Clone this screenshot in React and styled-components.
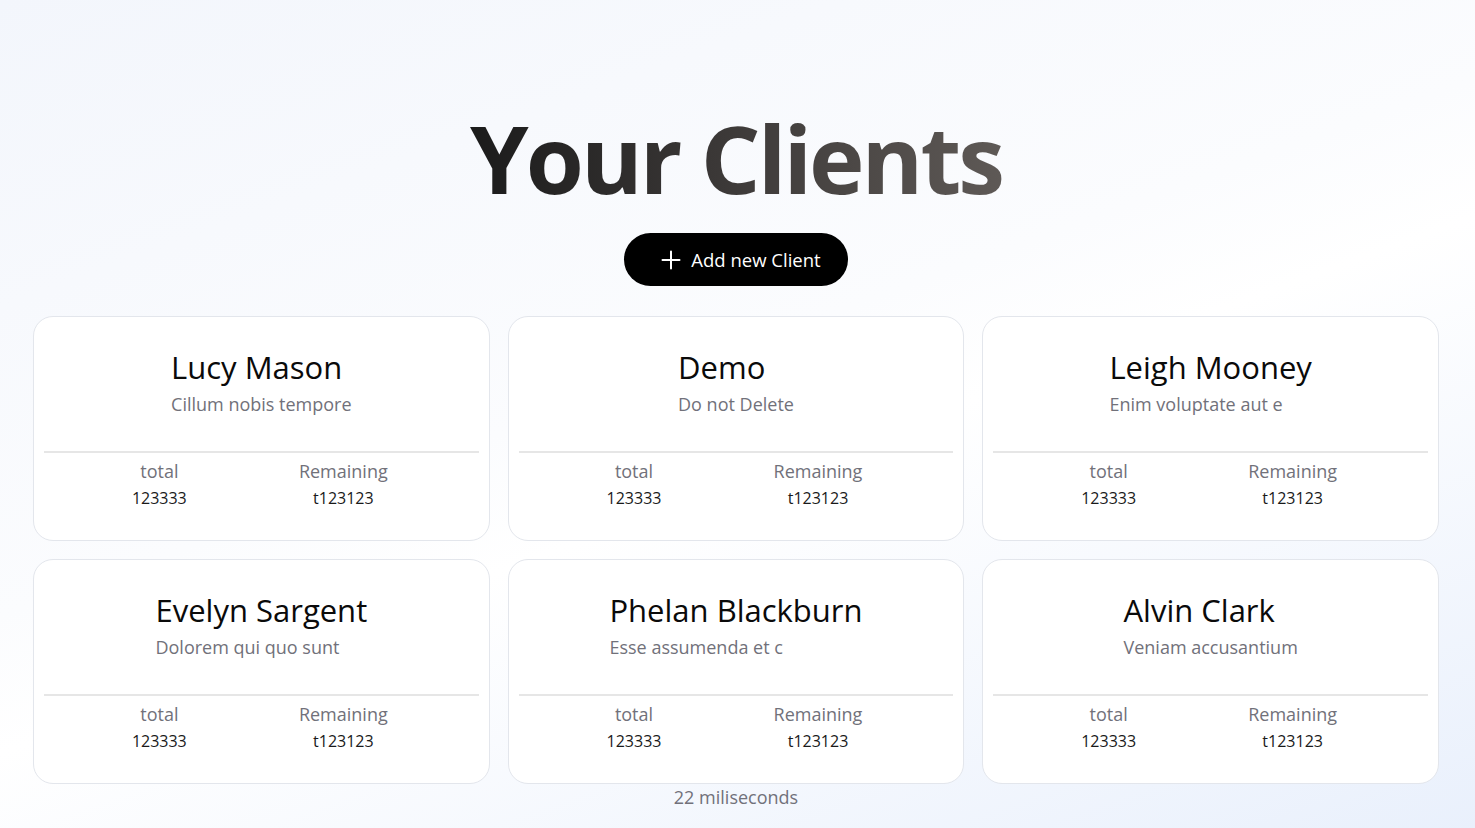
import React from 'react';
import styled, { createGlobalStyle } from 'styled-components';

const GlobalStyle = createGlobalStyle`
  * { box-sizing: border-box; }
  body {
    margin: 0;
    font-family: 'Open Sans', 'Noto Sans', sans-serif;
    color: #111;
  }
`;

const Page = styled.main`
  min-height: 100vh;
  padding: 111px 36px 24px 33px;
  display: flex;
  flex-direction: column;
  align-items: center;
  background: linear-gradient(160deg, #f3f6fc 0%, #fbfcfe 45%, #ffffff 55%, #e9f0fc 100%);
`;

const Title = styled.h1`
  margin: 0;
  font-size: 94px;
  line-height: 1;
  font-weight: 700;
  letter-spacing: -3px;
  background: linear-gradient(90deg, #1b1b1b 0%, #3a3736 45%, #5e5956 100%);
  -webkit-background-clip: text;
  background-clip: text;
  color: transparent;
`;

const AddButton = styled.button`
  margin-top: 28px;
  height: 53px;
  padding: 0 27px 0 37px;
  display: flex;
  align-items: center;
  gap: 10px;
  border: none;
  border-radius: 999px;
  background: #000;
  color: #fff;
  font-family: inherit;
  font-size: 18.5px;
  cursor: pointer;
`;

const Grid = styled.section`
  margin-top: 30px;
  width: 100%;
  display: grid;
  grid-template-columns: repeat(3, 1fr);
  gap: 18px;
`;

const Card = styled.article`
  background: #fff;
  border: 1px solid #e3e6ec;
  border-radius: 20px;
  padding: 31px 10px 30px;
  display: flex;
  flex-direction: column;
`;

const Header = styled.div`
  align-self: center;
  text-align: left;
`;

const Name = styled.h2`
  margin: 0;
  font-size: 31px;
  line-height: 38px;
  font-weight: 500;
  color: #0a0a0a;
`;

const Note = styled.p`
  margin: 5px 0 0;
  font-size: 18px;
  line-height: 27px;
  color: #71717a;
`;

const Divider = styled.hr`
  margin: 33px 0 0;
  border: none;
  height: 2px;
  background: #e6e6e6;
`;

const Stats = styled.div`
  margin-top: 6px;
  display: grid;
  grid-template-columns: 164px 204px;
  justify-content: center;
`;

const Stat = styled.div`
  text-align: center;
`;

const StatLabel = styled.div`
  font-size: 18px;
  line-height: 24px;
  color: #71717a;
`;

const StatValue = styled.div`
  margin-top: 3px;
  font-size: 16px;
  line-height: 24px;
  color: #1a1a1a;
`;

const Timing = styled.p`
  margin: 1px 0 0;
  font-size: 18px;
  line-height: 24px;
  color: #71717a;
`;

const PlusIcon = () => (
  <svg width="20" height="20" viewBox="0 0 20 20" fill="none" stroke="currentColor" strokeWidth="2" strokeLinecap="round">
    <path d="M1.5 10h17M10 1.5v17" />
  </svg>
);

const clients = [
  { name: 'Lucy Mason', note: 'Cillum nobis tempore' },
  { name: 'Demo', note: 'Do not Delete' },
  { name: 'Leigh Mooney', note: 'Enim voluptate aut e' },
  { name: 'Evelyn Sargent', note: 'Dolorem qui quo sunt' },
  { name: 'Phelan Blackburn', note: 'Esse assumenda et c' },
  { name: 'Alvin Clark', note: 'Veniam accusantium' },
];

const App = () => {
  return (
    <>
      <GlobalStyle />
      <Page>
        <Title>Your Clients</Title>
        <AddButton>
          <PlusIcon />
          Add new Client
        </AddButton>
        <Grid>
          {clients.map((c) => (
            <Card key={c.name}>
              <Header>
                <Name>{c.name}</Name>
                <Note>{c.note}</Note>
              </Header>
              <Divider />
              <Stats>
                <Stat>
                  <StatLabel>total</StatLabel>
                  <StatValue>123333</StatValue>
                </Stat>
                <Stat>
                  <StatLabel>Remaining</StatLabel>
                  <StatValue>t123123</StatValue>
                </Stat>
              </Stats>
            </Card>
          ))}
        </Grid>
        <Timing>22 miliseconds</Timing>
      </Page>
    </>
  );
};

export default App;
